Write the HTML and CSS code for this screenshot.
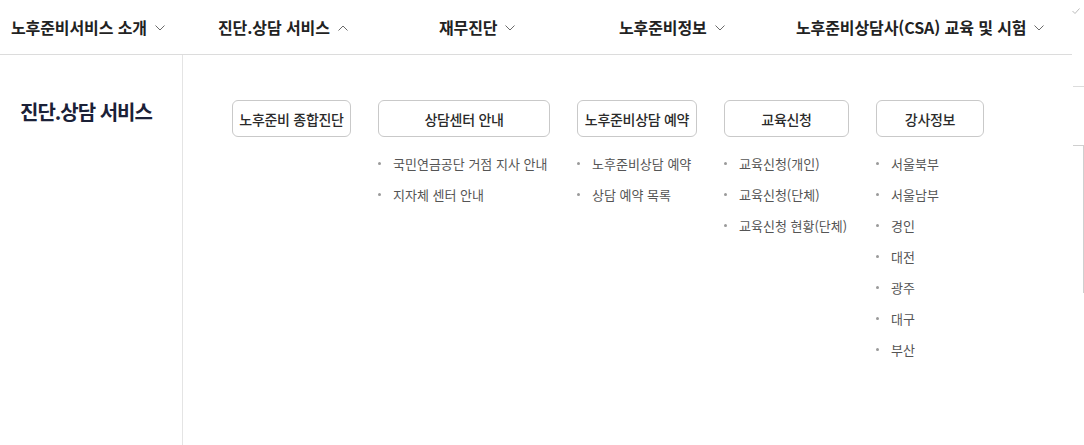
FILE: index.html
```html
<!DOCTYPE html>
<html lang="ko">
<head>
<meta charset="utf-8">
<title>진단.상담 서비스</title>
<link rel="stylesheet" href="styles.css">
</head>
<body>
<div class="page">
  <header class="gnb">
    <nav class="gnb-list">
      <a class="gnb-item">노후준비서비스 소개<svg class="chev" viewBox="0 0 10 6"><polyline points="0.5,0.5 5,5 9.5,0.5"/></svg></a>
      <a class="gnb-item">진단.상담 서비스<svg class="chev" viewBox="0 0 10 6"><polyline points="0.5,5.5 5,1 9.5,5.5"/></svg></a>
      <a class="gnb-item">재무진단<svg class="chev" viewBox="0 0 10 6"><polyline points="0.5,0.5 5,5 9.5,0.5"/></svg></a>
      <a class="gnb-item">노후준비정보<svg class="chev" viewBox="0 0 10 6"><polyline points="0.5,0.5 5,5 9.5,0.5"/></svg></a>
      <a class="gnb-item">노후준비상담사(CSA) 교육 및 시험<svg class="chev" viewBox="0 0 10 6"><polyline points="0.5,0.5 5,5 9.5,0.5"/></svg></a>
    </nav>
  </header>

  <div class="mega">
    <aside class="side">
      <h2 class="side-title">진단.상담 서비스</h2>
    </aside>
    <div class="menus">
      <div class="col">
        <a class="btn">노후준비 종합진단</a>
      </div>
      <div class="col">
        <a class="btn">상담센터 안내</a>
        <ul class="sub">
          <li>국민연금공단 거점 지사 안내</li>
          <li>지자체 센터 안내</li>
        </ul>
      </div>
      <div class="col">
        <a class="btn">노후준비상담 예약</a>
        <ul class="sub">
          <li>노후준비상담 예약</li>
          <li>상담 예약 목록</li>
        </ul>
      </div>
      <div class="col">
        <a class="btn">교육신청</a>
        <ul class="sub">
          <li>교육신청(개인)</li>
          <li>교육신청(단체)</li>
          <li>교육신청 현황(단체)</li>
        </ul>
      </div>
      <div class="col">
        <a class="btn">강사정보</a>
        <ul class="sub">
          <li>서울북부</li>
          <li>서울남부</li>
          <li>경인</li>
          <li>대전</li>
          <li>광주</li>
          <li>대구</li>
          <li>부산</li>
        </ul>
      </div>
    </div>
  </div>

  <svg class="edge-check" viewBox="0 0 8 6"><polyline points="0.5,3 3,5.5 7.5,0.5"/></svg>
  <div class="edge-line"></div>
  <div class="edge-bracket"></div>
</div>
</body>
</html>
```

FILE: styles.css
```css
html, body {
  margin: 0;
  padding: 0;
  background: #fff;
}

body {
  font-family: "Noto Sans CJK KR", "Noto Sans", sans-serif;
  color: #222;
}

.page {
  position: relative;
  width: 1084px;
  height: 445px;
  overflow: hidden;
}

a {
  text-decoration: none;
  color: inherit;
}

/* top navigation */
.gnb {
  width: 1072px;
  height: 54px;
  border-bottom: 1px solid #dcdcdc;
}

.gnb-list {
  display: grid;
  grid-template-columns: 207px 221px 180px 177px auto;
  align-items: center;
  height: 54px;
  padding-left: 11px;
}

.gnb-item {
  display: flex;
  align-items: center;
  gap: 8px;
  font-size: 16px;
  font-weight: 700;
  letter-spacing: -0.1px;
  color: #222;
  white-space: nowrap;
  line-height: 20px;
}

.chev {
  width: 10px;
  height: 6px;
  flex: none;
  fill: none;
  stroke: #6a6a6a;
  stroke-width: 1;
  margin-top: 1px;
}

/* mega menu */
.mega {
  display: flex;
  height: 390px;
}

.side {
  width: 183px;
  flex: none;
  box-sizing: border-box;
  border-right: 1px solid #e4e4e4;
  padding: 44px 0 0 20px;
}

.side-title {
  margin: 0;
  font-size: 20px;
  line-height: 26px;
  font-weight: 700;
  letter-spacing: -1px;
  color: #1b2137;
  white-space: nowrap;
}

.menus {
  display: grid;
  grid-template-columns: 119px 172px 120px 125px 108px;
  column-gap: 27px;
  align-items: start;
  padding: 45px 0 0 49px;
}

.col {
  display: flex;
  flex-direction: column;
}

.btn {
  display: flex;
  align-items: center;
  justify-content: center;
  height: 37px;
  box-sizing: border-box;
  border: 1px solid #c9c9c9;
  border-radius: 6px;
  font-size: 14px;
  font-weight: 500;
  letter-spacing: -0.3px;
  color: #2a2a2a;
  white-space: nowrap;
}

.sub {
  list-style: none;
  margin: 0;
  padding: 11px 0 0;
}

.sub li {
  display: flex;
  align-items: center;
  height: 31px;
  font-size: 13px;
  letter-spacing: 0;
  color: #555;
  white-space: nowrap;
}

.sub li::before {
  content: "";
  flex: none;
  width: 3px;
  height: 3px;
  border-radius: 50%;
  background: #9a9a9a;
  margin-right: 12px;
}

/* fragments of the page underneath, visible at the right edge */
.edge-check {
  position: absolute;
  left: 1072px;
  top: 8px;
  width: 8px;
  height: 6px;
  fill: none;
  stroke: #bbb;
  stroke-width: 1;
}

.edge-line {
  position: absolute;
  left: 1073px;
  top: 86px;
  width: 11px;
  height: 1px;
  background: #dcdcdc;
}

.edge-bracket {
  position: absolute;
  left: 1073px;
  top: 145px;
  width: 10px;
  height: 147px;
  border-top: 1px solid #cfcfcf;
  border-right: 1px solid #cfcfcf;
}
```
